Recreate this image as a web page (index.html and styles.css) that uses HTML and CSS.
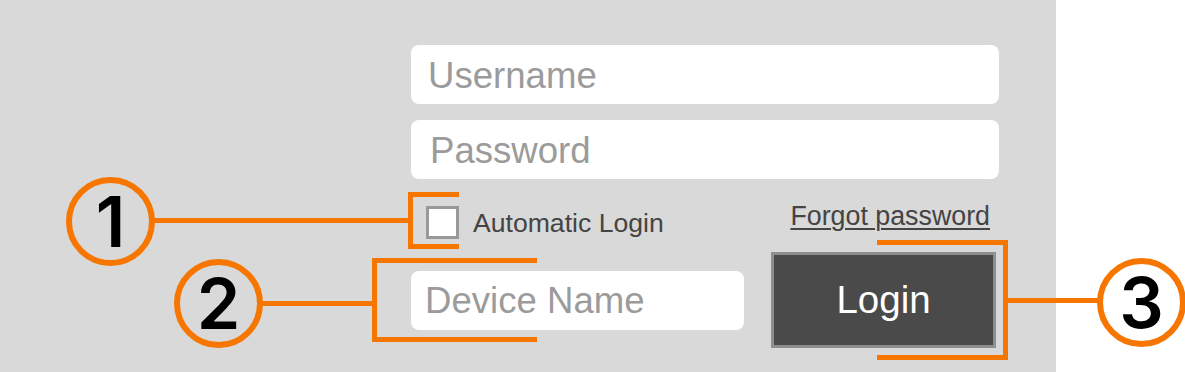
FILE: index.html
```html
<!DOCTYPE html>
<html lang="en">
<head>
<meta charset="utf-8">
<title>Login</title>
<link rel="stylesheet" href="styles.css">
</head>
<body>
<div class="stage">
  <div class="panel">
    <form class="form">
      <div class="field field-wide"><span class="ph ph-user">Username</span></div>
      <div class="field field-wide field-pass"><span class="ph ph-pass">Password</span></div>
      <div class="opt-row">
        <label class="auto">
          <span class="check"></span>
          <span class="auto-text">Automatic Login</span>
        </label>
        <a class="forgot" href="#">Forgot password</a>
      </div>
      <div class="bottom-row">
        <div class="field field-device"><span class="ph">Device Name</span></div>
        <div class="login-btn">Login</div>
      </div>
    </form>
  </div>

  <div class="callout c1"><span>1</span></div>
  <div class="callout c2"><span>2</span></div>
  <div class="callout c3"><span>3</span></div>

  <div class="line l1"></div>
  <div class="line l2"></div>
  <div class="line l3"></div>

  <div class="bracket b1"></div>
  <div class="bracket b2"></div>
  <div class="bracket b3"></div>
</div>
</body>
</html>
```
FILE: styles.css
```css
* { box-sizing: border-box; }

html, body {
  margin: 0;
  padding: 0;
  background: #ffffff;
}

body {
  font-family: "Liberation Sans", Arial, sans-serif;
  width: 1185px;
  height: 372px;
  overflow: hidden;
}

.stage {
  position: relative;
  width: 1185px;
  height: 372px;
}

.panel {
  width: 1056px;
  height: 372px;
  background: #d9d9d9;
  padding-top: 45px;
  padding-left: 411px;
}

.form {
  width: 588px;
  display: flex;
  flex-direction: column;
  margin: 0;
}

.field {
  height: 59px;
  background: #ffffff;
  border-radius: 8px;
  display: flex;
  align-items: center;
  padding-left: 13px;
}

.field-wide {
  width: 588px;
  padding-left: 17px;
}

.field-pass {
  margin-top: 16px;
  padding-left: 19px;
}

.ph {
  font-size: 36.6px;
  color: #9b9b9b;
  line-height: 40px;
  padding-top: 2px;
}

.opt-row {
  margin-top: 21px;
  height: 52px;
  display: flex;
  justify-content: space-between;
  align-items: flex-start;
}

.auto {
  display: flex;
  align-items: center;
  margin-top: 4px;
  margin-left: 15px;
}

.check {
  width: 33px;
  height: 33px;
  background: #ffffff;
  border: 3px solid #999999;
}

.auto-text {
  margin-left: 14px;
  font-size: 26.6px;
  line-height: 33px;
  padding-top: 3px;
  color: #444444;
}

.forgot {
  margin-top: 1px;
  margin-right: 9px;
  font-size: 26.8px;
  line-height: 30px;
  color: #444444;
  text-decoration: underline;
  text-decoration-thickness: 2px;
  text-underline-offset: 3px;
}

.bottom-row {
  height: 96px;
  display: flex;
  align-items: center;
}

.field-device {
  width: 333px;
  padding-left: 14px;
}

.login-btn {
  margin-left: 27px;
  width: 225px;
  height: 96px;
  background: #4a4a4a;
  border: 3px solid #8e8e8e;
  color: #ffffff;
  font-size: 38.5px;
  display: flex;
  align-items: center;
  justify-content: center;
}

/* annotations */
.callout {
  position: absolute;
  width: 89px;
  height: 89px;
  border: 6px solid #f77600;
  border-radius: 50%;
  display: flex;
  align-items: center;
  justify-content: center;
  font-family: Inter, "Open Sans", sans-serif;
  font-weight: 600;
  font-size: 70px;
  color: #000000;
  line-height: 1;
}

.callout span { display: block; }

.c1 { left: 66px; top: 177px; }
.c2 { left: 174px; top: 259px; }
.c3 { left: 1097px; top: 258px; }

.line {
  position: absolute;
  height: 5px;
  background: #f77600;
}

.l1 { left: 154px; top: 218px; width: 256px; }
.l2 { left: 262px; top: 301px; width: 112px; }
.l3 { left: 1006px; top: 298px; width: 93px; }

.bracket {
  position: absolute;
  border: 5px solid #f77600;
}

.b1 { left: 408px; top: 192px; width: 51px; height: 57px; border-right: none; }
.b2 { left: 372px; top: 258px; width: 165px; height: 84px; border-right: none; }
.b3 { left: 877px; top: 240px; width: 131px; height: 120px; border-left: none; }
```
